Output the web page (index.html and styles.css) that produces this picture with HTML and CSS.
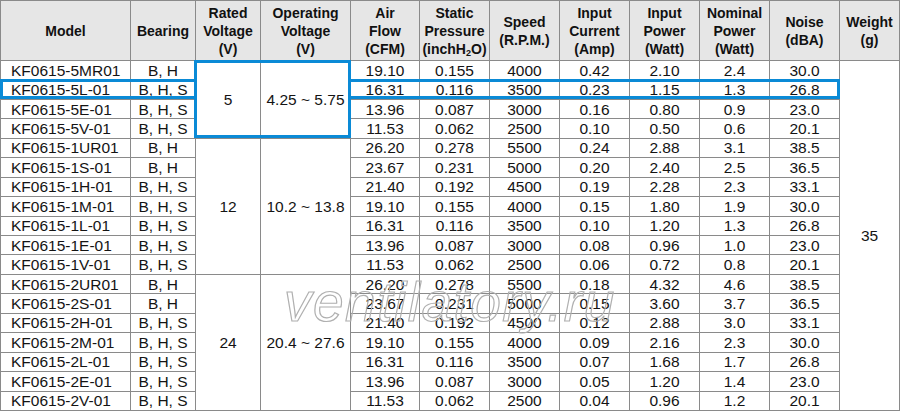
FILE: index.html
```html
<!DOCTYPE html>
<html lang="en">
<head>
<meta charset="utf-8">
<title>KF0615 fan specifications</title>
<link rel="stylesheet" href="styles.css">
</head>
<body>
<div class="sheet">
  <div class="spec">
    <div class="h"><span>Model</span></div>
    <div class="h"><span>Bearing</span></div>
    <div class="h"><span>Rated<br>Voltage<br>(V)</span></div>
    <div class="h"><span>Operating<br>Voltage<br>(V)</span></div>
    <div class="h"><span>Air<br>Flow<br>(CFM)</span></div>
    <div class="h"><span>Static<br>Pressure<br>(inchH<sub>2</sub>O)</span></div>
    <div class="h"><span>Speed<br>(R.P.M.)</span></div>
    <div class="h"><span>Input<br>Current<br>(Amp)</span></div>
    <div class="h"><span>Input<br>Power<br>(Watt)</span></div>
    <div class="h"><span>Nominal<br>Power<br>(Watt)</span></div>
    <div class="h"><span>Noise<br>(dBA)</span></div>
    <div class="h"><span>Weight<br>(g)</span></div>

    <div class="c m">KF0615-5MR01</div><div class="c">B, H</div><div class="c s4">5</div><div class="c s4">4.25 ~ 5.75</div><div class="c">19.10</div><div class="c">0.155</div><div class="c">4000</div><div class="c">0.42</div><div class="c">2.10</div><div class="c">2.4</div><div class="c">30.0</div><div class="c s18">35</div>
    <div class="c m">KF0615-5L-01</div><div class="c">B, H, S</div><div class="c">16.31</div><div class="c">0.116</div><div class="c">3500</div><div class="c">0.23</div><div class="c">1.15</div><div class="c">1.3</div><div class="c">26.8</div>
    <div class="c m">KF0615-5E-01</div><div class="c">B, H, S</div><div class="c">13.96</div><div class="c">0.087</div><div class="c">3000</div><div class="c">0.16</div><div class="c">0.80</div><div class="c">0.9</div><div class="c">23.0</div>
    <div class="c m">KF0615-5V-01</div><div class="c">B, H, S</div><div class="c">11.53</div><div class="c">0.062</div><div class="c">2500</div><div class="c">0.10</div><div class="c">0.50</div><div class="c">0.6</div><div class="c">20.1</div>

    <div class="c m">KF0615-1UR01</div><div class="c">B, H</div><div class="c s7">12</div><div class="c s7">10.2 ~ 13.8</div><div class="c">26.20</div><div class="c">0.278</div><div class="c">5500</div><div class="c">0.24</div><div class="c">2.88</div><div class="c">3.1</div><div class="c">38.5</div>
    <div class="c m">KF0615-1S-01</div><div class="c">B, H</div><div class="c">23.67</div><div class="c">0.231</div><div class="c">5000</div><div class="c">0.20</div><div class="c">2.40</div><div class="c">2.5</div><div class="c">36.5</div>
    <div class="c m">KF0615-1H-01</div><div class="c">B, H, S</div><div class="c">21.40</div><div class="c">0.192</div><div class="c">4500</div><div class="c">0.19</div><div class="c">2.28</div><div class="c">2.3</div><div class="c">33.1</div>
    <div class="c m">KF0615-1M-01</div><div class="c">B, H, S</div><div class="c">19.10</div><div class="c">0.155</div><div class="c">4000</div><div class="c">0.15</div><div class="c">1.80</div><div class="c">1.9</div><div class="c">30.0</div>
    <div class="c m">KF0615-1L-01</div><div class="c">B, H, S</div><div class="c">16.31</div><div class="c">0.116</div><div class="c">3500</div><div class="c">0.10</div><div class="c">1.20</div><div class="c">1.3</div><div class="c">26.8</div>
    <div class="c m">KF0615-1E-01</div><div class="c">B, H, S</div><div class="c">13.96</div><div class="c">0.087</div><div class="c">3000</div><div class="c">0.08</div><div class="c">0.96</div><div class="c">1.0</div><div class="c">23.0</div>
    <div class="c m">KF0615-1V-01</div><div class="c">B, H, S</div><div class="c">11.53</div><div class="c">0.062</div><div class="c">2500</div><div class="c">0.06</div><div class="c">0.72</div><div class="c">0.8</div><div class="c">20.1</div>

    <div class="c m">KF0615-2UR01</div><div class="c">B, H</div><div class="c s7">24</div><div class="c s7">20.4 ~ 27.6</div><div class="c">26.20</div><div class="c">0.278</div><div class="c">5500</div><div class="c">0.18</div><div class="c">4.32</div><div class="c">4.6</div><div class="c">38.5</div>
    <div class="c m">KF0615-2S-01</div><div class="c">B, H</div><div class="c">23.67</div><div class="c">0.231</div><div class="c">5000</div><div class="c">0.15</div><div class="c">3.60</div><div class="c">3.7</div><div class="c">36.5</div>
    <div class="c m">KF0615-2H-01</div><div class="c">B, H, S</div><div class="c">21.40</div><div class="c">0.192</div><div class="c">4500</div><div class="c">0.12</div><div class="c">2.88</div><div class="c">3.0</div><div class="c">33.1</div>
    <div class="c m">KF0615-2M-01</div><div class="c">B, H, S</div><div class="c">19.10</div><div class="c">0.155</div><div class="c">4000</div><div class="c">0.09</div><div class="c">2.16</div><div class="c">2.3</div><div class="c">30.0</div>
    <div class="c m">KF0615-2L-01</div><div class="c">B, H, S</div><div class="c">16.31</div><div class="c">0.116</div><div class="c">3500</div><div class="c">0.07</div><div class="c">1.68</div><div class="c">1.7</div><div class="c">26.8</div>
    <div class="c m">KF0615-2E-01</div><div class="c">B, H, S</div><div class="c">13.96</div><div class="c">0.087</div><div class="c">3000</div><div class="c">0.05</div><div class="c">1.20</div><div class="c">1.4</div><div class="c">23.0</div>
    <div class="c m">KF0615-2V-01</div><div class="c">B, H, S</div><div class="c">11.53</div><div class="c">0.062</div><div class="c">2500</div><div class="c">0.04</div><div class="c">0.96</div><div class="c">1.2</div><div class="c">20.1</div>
  </div>

  <div class="hl hl-row-left"></div>
  <div class="hl hl-volt"></div>
  <div class="hl hl-row-right"></div>
  <div class="watermark">ventilatory.ru</div>
</div>
</body>
</html>
```

FILE: styles.css
```css
html, body {
  margin: 0;
  padding: 0;
  background: #ffffff;
}

body {
  font-family: "Liberation Sans", Arial, sans-serif;
  color: #141414;
}

.sheet {
  position: relative;
  width: 900px;
  height: 412px;
  overflow: hidden;
}

.spec {
  display: grid;
  grid-template-columns: 130px 65px 65px 90px 69px 70px 70px 70px 70px 70px 70px 60px;
  grid-template-rows: 60px repeat(18, minmax(0, 1fr));
  width: 900px;
  height: 411px;
  box-sizing: border-box;
  border-top: 1px solid #8a8a8a;
  border-left: 1px solid #8a8a8a;
}

.h,
.c {
  box-sizing: border-box;
  min-height: 0;
  border-right: 1px solid #8a8a8a;
  border-bottom: 1px solid #8a8a8a;
  display: flex;
  align-items: center;
  justify-content: center;
  text-align: center;
  white-space: nowrap;
}

.h {
  background: #e6e6e6;
  font-weight: bold;
  font-size: 14px;
  line-height: 18px;
  color: #111111;
}

.h sub {
  font-size: 9px;
  line-height: 0;
  vertical-align: -2px;
}

.c {
  font-size: 15.5px;
  line-height: 16px;
  padding-top: 1px;
}

.c.m {
  justify-content: flex-start;
  padding-left: 10px;
}

.s4 { grid-row: span 4; }
.s7 { grid-row: span 7; }
.s18 { grid-row: span 18; }

.hl {
  position: absolute;
  box-sizing: border-box;
  border: 3px solid #0a8ad6;
  pointer-events: none;
}

.hl-row-left {
  left: 0;
  top: 79px;
  width: 197px;
  height: 20px;
}

.hl-volt {
  left: 194px;
  top: 60px;
  width: 157px;
  height: 78px;
}

.hl-row-right {
  left: 348px;
  top: 79px;
  width: 492px;
  height: 20px;
}

.watermark {
  position: absolute;
  left: 284px;
  top: 274px;
  font-family: "Liberation Sans", Arial, sans-serif;
  font-size: 55px;
  line-height: 56px;
  font-style: italic;
  letter-spacing: 1.5px;
  color: transparent;
  -webkit-text-stroke: 1.2px #b0b0b0;
  white-space: nowrap;
  pointer-events: none;
}
```
